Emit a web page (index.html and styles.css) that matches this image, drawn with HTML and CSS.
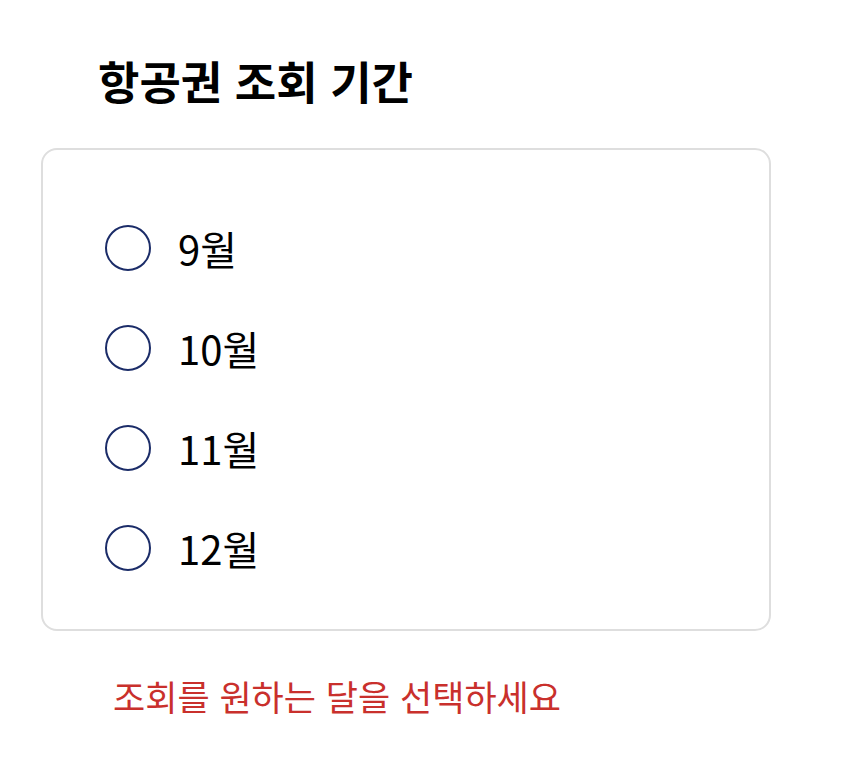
FILE: index.html
```html
<!DOCTYPE html>
<html lang="ko">
<head>
<meta charset="utf-8">
<link rel="stylesheet" href="styles.css">
</head>
<body>
<div class="page">
  <h1 class="title">항공권 조회 기간</h1>
  <div class="card">
    <label class="option"><span class="radio"></span><span class="label">9월</span></label>
    <label class="option"><span class="radio"></span><span class="label">10월</span></label>
    <label class="option"><span class="radio"></span><span class="label">11월</span></label>
    <label class="option"><span class="radio"></span><span class="label">12월</span></label>
  </div>
  <p class="error">조회를 원하는 달을 선택하세요</p>
</div>
</body>
</html>
```

FILE: styles.css
```css
html, body {
  margin: 0;
  padding: 0;
  background: #ffffff;
}
body {
  font-family: "Noto Sans CJK KR", "Noto Sans", sans-serif;
  color: #000;
}
.page {
  padding: 48px 0 0 41px;
  width: 730px;
}
.title {
  margin: 0 0 0 57px;
  font-size: 45px;
  font-weight: 700;
  line-height: 66px;
}
.card {
  margin-top: 34px;
  box-sizing: border-box;
  width: 730px;
  height: 483px;
  border: 2px solid #dedede;
  border-radius: 16px;
  padding: 75px 0 0 62px;
  display: flex;
  flex-direction: column;
  gap: 54px;
}
.option {
  display: flex;
  align-items: center;
  height: 46px;
}
.radio {
  box-sizing: border-box;
  width: 46px;
  height: 46px;
  border: 2px solid #1b2c68;
  border-radius: 50%;
  flex: none;
}
.label {
  margin-left: 27px;
  font-size: 40px;
  line-height: 46px;
}
.error {
  margin: 42px 0 0 72px;
  font-size: 35px;
  line-height: 46px;
  color: #c9302c;
}
```
